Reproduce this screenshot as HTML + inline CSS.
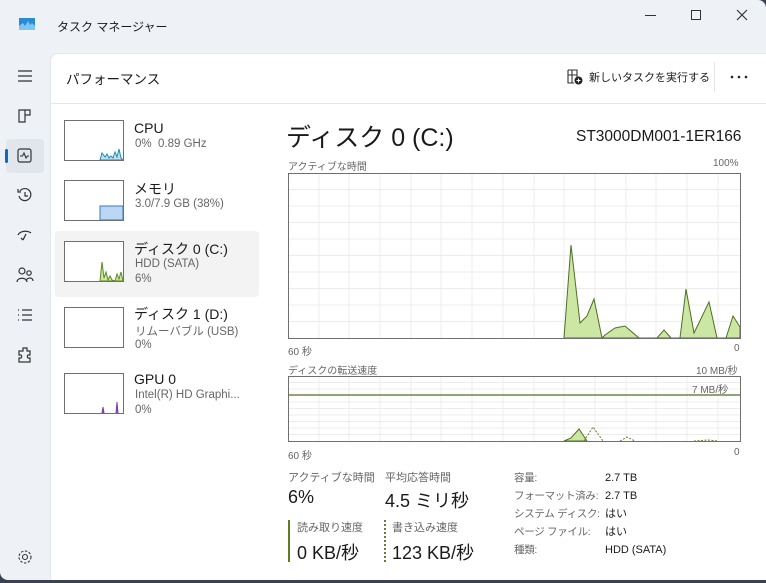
<!DOCTYPE html>
<html><head><meta charset="utf-8"><style>
*{margin:0;padding:0;box-sizing:border-box}
body{width:766px;height:583px;overflow:hidden;background:#3a4250;font-family:"Liberation Sans","Noto Sans CJK JP",sans-serif;color:#1a1a1a;position:relative}
#win{position:absolute;left:0;top:0;width:766px;height:580px;background:#eef2f6;border-radius:0 8px 8px 8px;overflow:hidden}
.abs{position:absolute}
#pane{position:absolute;left:50px;top:53px;width:716px;height:527px;background:#fff;border-radius:8px 0 0 0;border-left:1px solid #e3e6ea;border-top:1px solid #e3e6ea}
.t{position:absolute;white-space:nowrap}
.thumb{position:absolute;width:60px;height:41px;border:1px solid #6f6f6f;background:#fff}
.gray{color:#666}
.icon{position:absolute;left:16px;width:18px;height:18px}
</style></head><body>
<div id="win">
 <svg class="abs" style="left:19px;top:18px" width="16" height="12"><rect width="16" height="12" fill="#2b8ad6"/><path d="M0 8 L4 5 L6 8 L9 3 L11 7 L13 5 L16 8 L16 12 L0 12Z" fill="#7cc6f3"/></svg>
 <div class="t" style="left:57px;top:18px;font-size:12px">タスク マネージャー</div>
 <div class="abs" style="left:645px;top:15px;width:11px;height:1px;background:#333"></div>
 <div class="abs" style="left:691px;top:10px;width:10px;height:10px;border:1px solid #333"></div>
 <svg class="abs" style="left:736px;top:9px" width="12" height="12"><path d="M1 1L11 11M11 1L1 11" stroke="#333" stroke-width="1.2"/></svg>
 <svg class="icon" style="top:67px" width="18" height="18"><path d="M2 4h14M2 9h14M2 14h14" stroke="#333" stroke-width="1.2"/></svg>
 <svg class="icon" style="top:107px" width="18" height="18"><path d="M3 3h6v12H3zM9 3h5v5H9z" fill="none" stroke="#333" stroke-width="1.2"/></svg>
 <div class="abs" style="left:6px;top:139px;width:38px;height:34px;background:#e1e6ec;border-radius:4px"></div>
 <div class="abs" style="left:5px;top:149px;width:3px;height:14px;background:#0f6cbd;border-radius:2px"></div>
 <svg class="icon" style="top:147px" width="18" height="18"><rect x="2" y="2" width="13" height="13" rx="2" fill="none" stroke="#333" stroke-width="1.2"/><path d="M4 9h2.5l1.5-3 2 5 1.5-2H13" fill="none" stroke="#333" stroke-width="1.1"/></svg>
 <svg class="icon" style="top:186px" width="18" height="18"><path d="M4 5A6 6 0 1 1 3 10" fill="none" stroke="#333" stroke-width="1.2"/><path d="M2 3v3h3M9 6v4h3" fill="none" stroke="#333" stroke-width="1.2"/></svg>
 <svg class="icon" style="top:226px" width="18" height="18"><path d="M2 9c2-4 9-5 13-2M7 14l3-6M5 12l2 2" fill="none" stroke="#333" stroke-width="1.3"/></svg>
 <svg class="icon" style="top:266px" width="18" height="18"><circle cx="6" cy="5" r="3" fill="none" stroke="#333" stroke-width="1.2"/><circle cx="13" cy="7" r="2.2" fill="none" stroke="#333" stroke-width="1.2"/><path d="M1 16c0-5 10-5 10 0M10 15c1-4 7-4 7 0" fill="none" stroke="#333" stroke-width="1.2"/></svg>
 <svg class="icon" style="top:306px" width="18" height="18"><path d="M2 4h1M2 9h1M2 14h1M6 4h10M6 9h10M6 14h10" stroke="#333" stroke-width="1.3"/></svg>
 <svg class="icon" style="top:346px" width="18" height="18"><path d="M7 2h4v3h3v4h-2a2 2 0 0 0 0 3h2v4H3v-4h2a2 2 0 0 0 0-3H3V5h4z" fill="none" stroke="#333" stroke-width="1.2"/></svg>
 <svg class="icon" style="top:548px" width="18" height="18"><circle cx="9" cy="9" r="2.5" fill="none" stroke="#333" stroke-width="1.1"/><circle cx="9" cy="9" r="6" fill="none" stroke="#333" stroke-width="1.1" stroke-dasharray="2.4 1.6"/></svg>
</div>
<div id="pane">
 <div class="t" style="left:15px;top:14px;font-size:13.5px">パフォーマンス</div>
 <svg class="abs" style="left:516px;top:15px" width="16" height="16"><path d="M1 1h9v7M1 1v13h6M1 6h9M5 1v13" fill="none" stroke="#333" stroke-width="1.1"/><circle cx="11.5" cy="11.5" r="4" fill="#222"/><path d="M11.5 9.5v4M9.5 11.5h4" stroke="#fff" stroke-width="1.1"/></svg>
 <div class="t" style="left:538px;top:15px;font-size:11px">新しいタスクを実行する</div>
 <div class="abs" style="left:663px;top:8px;width:1px;height:30px;background:#e5e5e5"></div>
 <svg class="abs" style="left:679px;top:21px" width="18" height="4"><circle cx="2" cy="2" r="1.3" fill="#222"/><circle cx="9" cy="2" r="1.3" fill="#222"/><circle cx="16" cy="2" r="1.3" fill="#222"/></svg>
 <div class="abs" style="left:0;top:49px;width:716px;height:1px;background:#e8e8e8"></div>
 <div class="abs" style="left:4px;top:177px;width:204px;height:66px;background:#f3f3f3;border-radius:4px"></div>
</div>
<div class="thumb" style="left:64px;top:120px"><svg width="58" height="39"><path d="M35 39L37 32 40 36 42 33 44 37 46 35 48 37 50 31 52 36 54 28 56 37 58 39Z" fill="#bfe1ef" stroke="#1a90b8" stroke-width="1"/></svg></div>
<div class="t" style="left:134px;top:120px;font-size:14px">CPU</div>
<div class="t gray" style="left:135px;top:138px;font-size:11.5px">0%&nbsp; 0.89 GHz</div>
<div class="thumb" style="left:64px;top:180px"><svg width="58" height="39"><path d="M35 39V25H58V39Z" fill="#bcd7f3" stroke="#3a78c0" stroke-width="1"/></svg></div>
<div class="t" style="left:134px;top:179px;font-size:14px">メモリ</div>
<div class="t gray" style="left:135px;top:198px;font-size:11.5px">3.0/7.9 GB (38%)</div>
<div class="thumb" style="left:64px;top:241px"><svg width="58" height="39"><path d="M35 39L37 20 39 36 41 30 43 38 45 34 47 38 50 39 52 32 54 37 56 30 58 39Z" fill="#cbe7a3" stroke="#5e8a1f" stroke-width="1"/></svg></div>
<div class="t" style="left:134px;top:239px;font-size:14px">ディスク 0 (C:)</div>
<div class="t gray" style="left:135px;top:258px;font-size:11.5px">HDD (SATA)</div>
<div class="t gray" style="left:135px;top:273px;font-size:11.5px">6%</div>
<div class="thumb" style="left:64px;top:307px"></div>
<div class="t" style="left:134px;top:304px;font-size:14px">ディスク 1 (D:)</div>
<div class="t gray" style="left:135px;top:323px;font-size:11.5px">リムーバブル (USB)</div>
<div class="t gray" style="left:135px;top:339px;font-size:11.5px">0%</div>
<div class="thumb" style="left:64px;top:373px"><svg width="58" height="39"><path d="M37 39L38 33 39 39ZM51 39L52 28 53 39Z" fill="#9b59d0" stroke="#7a3bb0" stroke-width="1"/></svg></div>
<div class="t" style="left:134px;top:371px;font-size:14px">GPU 0</div>
<div class="t gray" style="left:135px;top:389px;font-size:11.5px">Intel(R) HD Graphi...</div>
<div class="t gray" style="left:135px;top:404px;font-size:11.5px">0%</div>
<div class="t" style="left:286px;top:118px;font-size:25px">ディスク 0 (C:)</div>
<div class="t" style="left:576px;top:128px;font-size:15.5px">ST3000DM001-1ER166</div>
<div class="t gray" style="left:288px;top:158px;font-size:10px">アクティブな時間</div>
<div class="t gray" style="left:713px;top:158px;font-size:10px">100%</div>
<svg class="abs" style="left:288px;top:173px" width="453" height="166">
 <g stroke="#ececec" stroke-width="1">
  <path d="M31 0V166M61 0V166M92 0V166M123 0V166M153 0V166M184 0V166M215 0V166M246 0V166M276 0V166M307 0V166M338 0V166M368 0V166M399 0V166M430 0V166"/>
  <path d="M0 16.5H453M0 33H453M0 49.5H453M0 66H453M0 82.5H453M0 99H453M0 115.5H453M0 132H453M0 148.5H453"/>
 </g>
 <path d="M276 165L283 72 292 150 299 143 306 126 314 165 317 162 327 155 337 153 351 165 369 165 376 157 383 165 392 165 398 116 406 160 421 129 429 165 438 165 445 143 452 154 452 165Z" fill="#cbe7a3" stroke="#4f6f22" stroke-width="1"/>
 <rect x="0.5" y="0.5" width="452" height="165" fill="none" stroke="#6f6f6f"/>
</svg>
<div class="t gray" style="left:288px;top:343px;font-size:10px">60 秒</div>
<div class="t gray" style="left:734px;top:343px;font-size:10px">0</div>
<div class="t gray" style="left:288px;top:362px;font-size:10px">ディスクの転送速度</div>
<div class="t gray" style="left:696px;top:362px;font-size:10px">10 MB/秒</div>
<svg class="abs" style="left:288px;top:376px" width="453" height="66">
 <g stroke="#ececec" stroke-width="1">
  <path d="M31 0V66M61 0V66M92 0V66M123 0V66M153 0V66M184 0V66M215 0V66M246 0V66M276 0V66M307 0V66M338 0V66M368 0V66M399 0V66M430 0V66"/>
  <path d="M0 6.5H453M0 13H453M0 26H453M0 32.5H453M0 39H453M0 45.5H453M0 52H453M0 58.5H453"/>
 </g>
 <path d="M276 65L283 62 291 53 299 65Z" fill="#cbe7a3" stroke="#4f6f22" stroke-width="1"/>
 <path d="M296 65L305 51 315 65M332 65L339 61 347 65M406 65L420 64 430 65" fill="none" stroke="#6a7a3a" stroke-width="1" stroke-dasharray="2 1.5"/>
 <path d="M0 19H453" stroke="#4f6f22" stroke-width="1.3"/>
 <rect x="0.5" y="0.5" width="452" height="65" fill="none" stroke="#6f6f6f"/>
</svg>
<div class="t gray" style="left:692px;top:381px;font-size:10px">7 MB/秒</div>
<div class="t gray" style="left:288px;top:447px;font-size:10px">60 秒</div>
<div class="t gray" style="left:734px;top:447px;font-size:10px">0</div>
<div class="t gray" style="left:288px;top:469px;font-size:11px">アクティブな時間</div>
<div class="t" style="left:288px;top:487px;font-size:18px">6%</div>
<div class="t gray" style="left:385px;top:469px;font-size:11px">平均応答時間</div>
<div class="t" style="left:385px;top:487px;font-size:18px">4.5 ミリ秒</div>
<div class="abs" style="left:288px;top:520px;width:2px;height:42px;background:#5e7f1f"></div>
<div class="t gray" style="left:297px;top:519px;font-size:11px">読み取り速度</div>
<div class="t" style="left:297px;top:539px;font-size:18px">0 KB/秒</div>
<div class="abs" style="left:384px;top:520px;width:0;height:42px;border-left:2px dotted #6a7a3a"></div>
<div class="t gray" style="left:392px;top:519px;font-size:11px">書き込み速度</div>
<div class="t" style="left:392px;top:539px;font-size:18px">123 KB/秒</div>
<div class="t gray" style="left:514px;top:469px;font-size:10.5px;line-height:18px;letter-spacing:-0.3px">容量:<br>フォーマット済み:<br>システム ディスク:<br>ページ ファイル:<br>種類:</div>
<div class="t" style="left:605px;top:469px;font-size:11px;line-height:18px">2.7 TB<br>2.7 TB<br>はい<br>はい<br>HDD (SATA)</div>
</body></html>
